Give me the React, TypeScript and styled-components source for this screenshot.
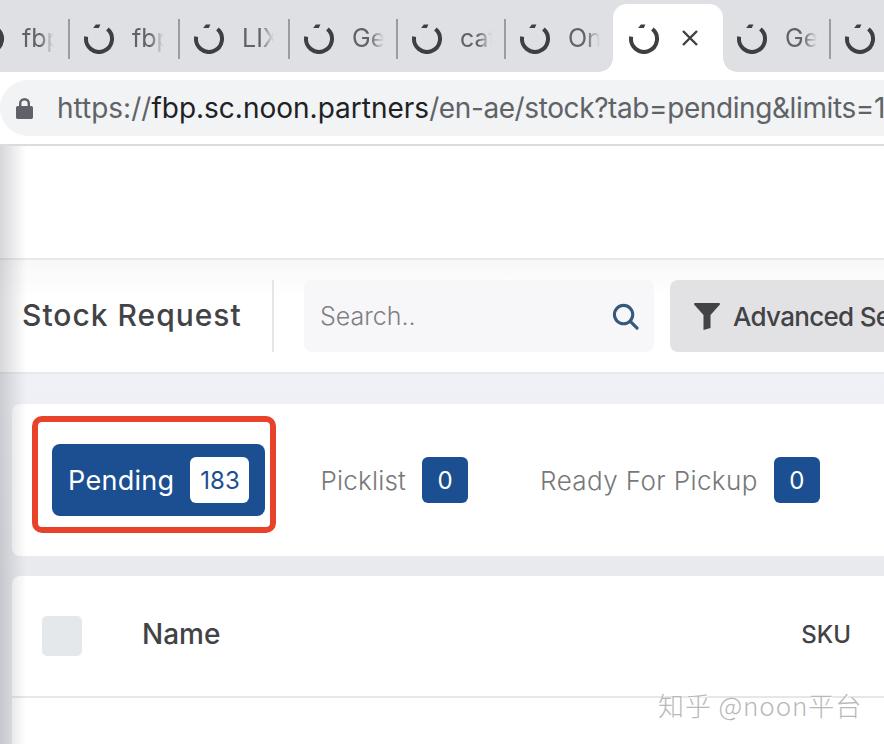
import React from 'react'
import styled, { createGlobalStyle } from 'styled-components'

const GlobalStyle = createGlobalStyle`
    html, body {
        margin: 0;
        padding: 0;
        width: 884px;
        height: 744px;
        overflow: hidden;
        background: #fff;
    }
    * { box-sizing: border-box; }
`

const Page = styled.div`
    position: relative;
    width: 884px;
    height: 744px;
    overflow: hidden;
    font-family: "Inter", "Liberation Sans", sans-serif;
`

const TabStrip = styled.div`
    display: flex;
    height: 72px;
    margin-left: -40px;
    background: #dfe0e4;
    overflow: hidden;
`

const TabItem = styled.div<{ $width: number; $active?: boolean; $sep?: boolean }>`
    position: relative;
    flex: 0 0 ${p => p.$width}px;
    display: flex;
    align-items: center;
    height: ${p => (p.$active ? '68px' : '72px')};
    margin-top: ${p => (p.$active ? '4px' : '0')};
    padding: ${p => (p.$active ? '0 0 0 15px' : '4px 0 0 13px')};
    background: ${p => (p.$active ? '#fff' : 'transparent')};
    border-radius: ${p => (p.$active ? '14px 14px 0 0' : '0')};
    ${p => p.$sep && `
        &::after {
            content: "";
            position: absolute;
            right: 0;
            top: 19px;
            width: 2px;
            height: 40px;
            background: #9b9ca0;
        }
    `}
    ${p => p.$active && `
        &::before, &::after {
            content: "";
            position: absolute;
            bottom: 0;
            width: 14px;
            height: 14px;
        }
        &::before {
            left: -14px;
            background: radial-gradient(circle at 0 0, transparent 13.5px, #fff 14px);
        }
        &::after {
            right: -14px;
            background: radial-gradient(circle at 100% 0, transparent 13.5px, #fff 14px);
        }
    `}
`

const TabTitle = styled.span`
    width: 32px;
    margin-left: 17px;
    overflow: hidden;
    white-space: nowrap;
    font-size: 25px;
    color: #5f6368;
    -webkit-mask-image: linear-gradient(90deg, #000 55%, transparent 100%);
    mask-image: linear-gradient(90deg, #000 55%, transparent 100%);
`

const CloseMark = styled.svg`
    margin-left: 22px;
    flex: none;
`

const AddressBar = styled.div`
    height: 74px;
    padding-top: 8px;
    background: #fff;
    border-bottom: 2px solid #dadce0;
`

const UrlPill = styled.div`
    display: flex;
    align-items: center;
    height: 56px;
    padding-left: 16px;
    background: #f1f3f4;
    border-radius: 28px 0 0 28px;
    white-space: nowrap;
    overflow: hidden;
`

const UrlText = styled.span`
    margin-left: 24px;
    font-size: 28px;
    color: #5f6368;
`

const UrlHost = styled.span`
    color: #202124;
`

const UrlPath = styled.span`
    letter-spacing: -0.4px;
`

const BlankBand = styled.div`
    height: 112px;
    background: #fff;
`

const Toolbar = styled.div`
    display: flex;
    align-items: center;
    height: 116px;
    padding-left: 22px;
    background: linear-gradient(180deg, #f8f8f8, #fff 40px);
    border-top: 2px solid #e8e8ea;
    border-bottom: 2px solid #e8e8ea;
`

const Title = styled.h1`
    flex: none;
    margin: 0;
    width: 252px;
    height: 72px;
    line-height: 70px;
    border-right: 2px solid #e6e6e8;
    font-size: 30px;
    font-weight: 500;
    letter-spacing: 1px;
    color: #424346;
`

const SearchBox = styled.div`
    display: flex;
    align-items: center;
    justify-content: space-between;
    flex: none;
    width: 350px;
    height: 72px;
    margin-left: 30px;
    padding: 0 15px 0 16px;
    background: #f7f7fa;
    border-radius: 8px;
    font-size: 25px;
    font-weight: 300;
    color: #7f8082;
`

const FilterButton = styled.div`
    display: flex;
    align-items: center;
    flex: none;
    width: 300px;
    height: 72px;
    margin-left: 16px;
    padding-left: 24px;
    background: #e2e2e4;
    border-radius: 8px;
    font-size: 26px;
    font-weight: 500;
    letter-spacing: -0.7px;
    color: #424346;
    white-space: nowrap;
`

const FilterLabel = styled.span`
    margin-left: 13px;
`

const Content = styled.div`
    height: 370px;
    padding: 30px 0 0 12px;
    background: linear-gradient(180deg, #f0f1f6, #e8eaee 200px);
`

const TabsCard = styled.div`
    display: flex;
    align-items: center;
    height: 152px;
    padding-left: 40px;
    background: #fff;
    border-radius: 8px 0 0 8px;
`

const Highlight = styled.div`
    position: absolute;
    left: 32px;
    top: 416px;
    width: 244px;
    height: 117px;
    border: 6px solid #e8432a;
    border-radius: 10px;
`

const StatusTab = styled.div<{ $active?: boolean; $gap: number; $tracking: number }>`
    display: flex;
    align-items: center;
    flex: none;
    height: 72px;
    margin-right: ${p => p.$gap}px;
    padding: ${p => (p.$active ? '0 16px' : '0')};
    background: ${p => (p.$active ? '#1c4f91' : 'transparent')};
    border-radius: 8px;
    font-size: ${p => (p.$active ? '27px' : '26px')};
    font-weight: ${p => (p.$active ? 400 : 300)};
    letter-spacing: ${p => p.$tracking}px;
    color: ${p => (p.$active ? '#fff' : '#77787a')};
`

const Count = styled.span<{ $active?: boolean }>`
    display: flex;
    align-items: center;
    justify-content: center;
    min-width: ${p => (p.$active ? '59px' : '46px')};
    height: 46px;
    margin-left: 16px;
    background: ${p => (p.$active ? '#fff' : '#1c4f91')};
    border-radius: 6px;
    font-size: 24px;
    font-weight: 400;
    letter-spacing: 0;
    color: ${p => (p.$active ? '#1c4f91' : '#fff')};
`

const ListCard = styled.div`
    height: 168px;
    margin-top: 20px;
    background: #fff;
    border-radius: 8px 0 0 0;
`

const HeadRow = styled.div`
    display: grid;
    grid-template-columns: 40px 1fr auto;
    align-items: center;
    height: 122px;
    padding: 0 33px 0 30px;
    border-bottom: 2px solid #e7e7e9;
    font-weight: 500;
    color: #424346;
`

const CheckBox = styled.div`
    width: 40px;
    height: 40px;
    background: #e4e8eb;
    border-radius: 5px;
`

const NameCell = styled.span`
    margin: 0 0 4px 60px;
    font-size: 28px;
`

const SkuCell = styled.span`
    margin-bottom: 4px;
    font-size: 24px;
`

const EdgeShadow = styled.div`
    position: absolute;
    left: 0;
    top: 146px;
    bottom: 0;
    width: 26px;
    background: linear-gradient(90deg, rgba(120, 122, 130, 0.3), rgba(120, 122, 130, 0));
    pointer-events: none;
`

const Watermark = styled.div`
    position: absolute;
    left: 658px;
    top: 687px;
    font-family: "Noto Sans CJK SC", "Inter", sans-serif;
    font-size: 26px;
    font-weight: 300;
    letter-spacing: 0.9px;
    line-height: 36px;
    color: #b8b8b8;
    white-space: nowrap;
    text-shadow: 1px 1px 0 rgba(255, 255, 255, 0.9);
`

const Spinner = () => (
    <svg width="32" height="32" viewBox="0 0 32 32" fill="none" style={{ flex: 'none' }}>
        <path d="M24.4 7A13 13 0 1 1 3.2 14.700" stroke="#3c4043" strokeWidth="4" />
        <path d="M12.800 2.500l-2.600 3.500h5.600l1.600-3.500z" fill="#3c4043" />
    </svg>
)

const Lock = () => (
    <svg width="17" height="22" viewBox="0 0 17 22" fill="#5f6368" style={{ flex: 'none' }}>
        <path d="M3 9V6.500a5.500 5.500 0 0 1 11 0V9h1.200c1 0 1.800.8 1.800 1.800v9.400c0 1-.8 1.800-1.800 1.800H1.800C.8 22 0 21.200 0 20.200v-9.400C0 9.800.8 9 1.800 9zm2.400 0h6.200V6.500a3.100 3.100 0 0 0-6.200 0z" />
    </svg>
)

const SearchIcon = () => (
    <svg width="27" height="27" viewBox="0 0 28 28" fill="none" stroke="#35597c" strokeWidth="3.200">
        <circle cx="12" cy="12" r="9.500" />
        <path d="M19 19l7 7" strokeLinecap="round" />
    </svg>
)

const FunnelIcon = () => (
    <svg width="26" height="28" viewBox="0 0 26 28" fill="#424346" style={{ flex: 'none' }}>
        <path d="M1 1h24a1 1 0 0 1 .7 1.700L16.500 13v13l-7 2V13L.3 2.700A1 1 0 0 1 1 1z" />
    </svg>
)

const tabs = [
    { title: 'fbp', width: 110, sep: true },
    { title: 'fbp', width: 110, sep: true },
    { title: 'LIX', width: 110, sep: true },
    { title: 'Ge', width: 108, sep: true },
    { title: 'cat', width: 108, sep: true },
    { title: 'On', width: 107 },
    { title: '', width: 110, active: true },
    { title: 'Ge', width: 108, sep: true },
    { title: '', width: 80 },
]

const App = () => {
    return (
        <Page>
            <GlobalStyle />
            <TabStrip>
                {tabs.map((tab, i) => (
                    <TabItem key={i} $width={tab.width} $active={tab.active} $sep={tab.sep}>
                        <Spinner />
                        {tab.title && <TabTitle>{tab.title}</TabTitle>}
                        {tab.active && (
                            <CloseMark width="16" height="16" viewBox="0 0 16 16" stroke="#3c4043" strokeWidth="2.400">
                                <path d="M1 1l14 14M15 1L1 15" />
                            </CloseMark>
                        )}
                    </TabItem>
                ))}
            </TabStrip>
            <AddressBar>
                <UrlPill>
                    <Lock />
                    <UrlText>
                        https://<UrlHost>fbp.sc.noon.partners</UrlHost>
                        <UrlPath>/en-ae/stock?tab=pending&amp;limits=10</UrlPath>
                    </UrlText>
                </UrlPill>
            </AddressBar>
            <BlankBand />
            <Toolbar>
                <Title>Stock Request</Title>
                <SearchBox>
                    Search..
                    <SearchIcon />
                </SearchBox>
                <FilterButton>
                    <FunnelIcon />
                    <FilterLabel>Advanced Search</FilterLabel>
                </FilterButton>
            </Toolbar>
            <Content>
                <TabsCard>
                    <StatusTab $active $gap={55} $tracking={0.3}>
                        Pending
                        <Count $active>183</Count>
                    </StatusTab>
                    <StatusTab $gap={72} $tracking={0.2}>
                        Picklist
                        <Count>0</Count>
                    </StatusTab>
                    <StatusTab $gap={0} $tracking={0.4}>
                        Ready For Pickup
                        <Count>0</Count>
                    </StatusTab>
                </TabsCard>
                <ListCard>
                    <HeadRow>
                        <CheckBox />
                        <NameCell>Name</NameCell>
                        <SkuCell>SKU</SkuCell>
                    </HeadRow>
                </ListCard>
            </Content>
            <EdgeShadow />
            <Highlight />
            <Watermark>知乎 @noon平台</Watermark>
        </Page>
    )
}

export default App
